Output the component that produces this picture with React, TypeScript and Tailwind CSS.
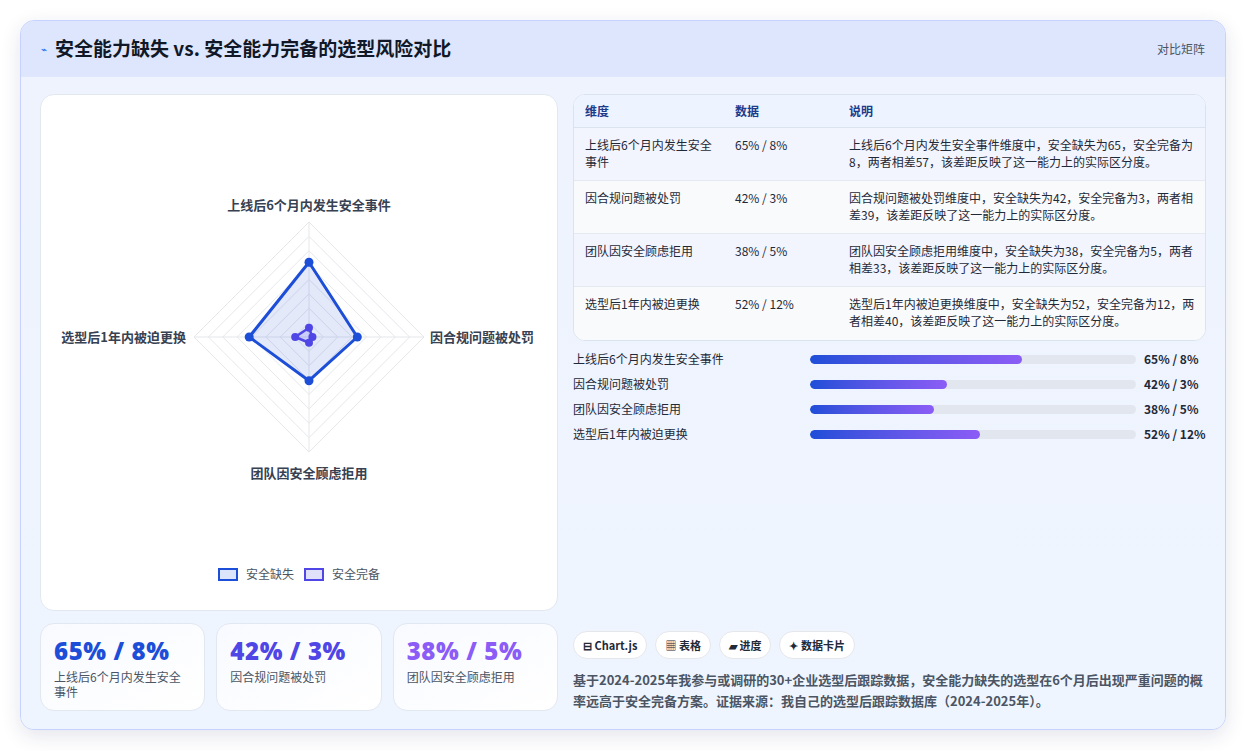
import React from "react";

const dims = ["上线后6个月内发生安全事件", "因合规问题被处罚", "团队因安全顾虑拒用", "选型后1年内被迫更换"];
const a = [65, 42, 38, 52];
const b = [8, 3, 5, 12];
const desc = [
  "上线后6个月内发生安全事件维度中，安全缺失为65，安全完备为8，两者相差57，该差距反映了这一能力上的实际区分度。",
  "因合规问题被处罚维度中，安全缺失为42，安全完备为3，两者相差39，该差距反映了这一能力上的实际区分度。",
  "团队因安全顾虑拒用维度中，安全缺失为38，安全完备为5，两者相差33，该差距反映了这一能力上的实际区分度。",
  "选型后1年内被迫更换维度中，安全缺失为52，安全完备为12，两者相差40，该差距反映了这一能力上的实际区分度。",
];

function Radar() {
  const cx = 268, cy = 242, R = 115;
  const pts = (v: number[]) => {
    const dirs = [[0, -1], [1, 0], [0, 1], [-1, 0]];
    return v.map((x, i) => [cx + dirs[i][0] * R * x / 100, cy + dirs[i][1] * R * x / 100]);
  };
  const rings = [1, 2, 3, 4, 5, 6, 7, 8].map(i => i / 8);
  const pa = pts(a), pb = pts(b);
  return (
    <svg width="517" height="470" viewBox="0 0 517 470">
      {rings.map((r, i) => (
        <polygon key={i} points={`${cx},${cy - R * r} ${cx + R * r},${cy} ${cx},${cy + R * r} ${cx - R * r},${cy}`} fill="none" stroke="#e5e7eb" strokeWidth="1" />
      ))}
      <line x1={cx} y1={cy - R} x2={cx} y2={cy + R} stroke="#e5e7eb" />
      <line x1={cx - R} y1={cy} x2={cx + R} y2={cy} stroke="#e5e7eb" />
      <polygon points={pa.map(p => p.join(",")).join(" ")} fill="rgba(29,78,216,0.12)" stroke="#1d4ed8" strokeWidth="3" strokeLinejoin="round" />
      {pa.map((p, i) => <circle key={i} cx={p[0]} cy={p[1]} r="4.5" fill="#1d4ed8" />)}
      <polygon points={pb.map(p => p.join(",")).join(" ")} fill="rgba(99,102,241,0.2)" stroke="#4f46e5" strokeWidth="2.5" strokeLinejoin="round" />
      {pb.map((p, i) => <circle key={i} cx={p[0]} cy={p[1]} r="4" fill="#4f46e5" />)}
      <text x={cx} y={cy - R - 12} textAnchor="middle" fontSize="13" fontWeight="600" fill="#374151">上线后6个月内发生安全事件</text>
      <text x={cx + R + 6} y={cy + 5} textAnchor="start" fontSize="13" fontWeight="600" fill="#374151">因合规问题被处罚</text>
      <text x={cx} y={cy + R + 12 + 14} textAnchor="middle" fontSize="13" fontWeight="600" fill="#374151">团队因安全顾虑拒用</text>
      <text x={cx - R - 8} y={cy + 5} textAnchor="end" fontSize="13" fontWeight="600" fill="#374151">选型后1年内被迫更换</text>
    </svg>
  );
}

export default function App() {
  return (
    <div className="w-[1246px] h-[751px] bg-white p-[20px]" style={{ fontFamily: '"Noto Sans CJK SC", "Noto Sans", sans-serif' }}>
      <div className="w-[1206px] h-[710px] rounded-[14px] border border-[#c7d2fe] bg-[#eef4ff] shadow-[0_6px_20px_rgba(30,41,99,0.12)] overflow-hidden flex flex-col">
        <div className="h-[56px] shrink-0 bg-[#dde6fd] flex items-center justify-between px-[20px] border-b border-[#e0e7ff]">
          <div className="flex items-center gap-[8px]">
            <span className="text-[#2563eb] text-[10px]">⌁</span>
            <span className="text-[19px] font-bold text-[#111827]">安全能力缺失 vs. 安全能力完备的选型风险对比</span>
          </div>
          <span className="text-[12px] text-[#4b5563]">对比矩阵</span>
        </div>
        <div className="flex-1 flex gap-[15px] px-[19px] pt-[17px] pb-[19px] bg-gradient-to-b from-[#eef3fe] to-[#eff5ff]">
          <div className="w-[518px] flex flex-col gap-[12px]">
            <div className="h-[517px] bg-white rounded-[14px] border border-[#e2e8f0] flex flex-col items-center">
              <div className="pt-[0px]"><Radar /></div>
              <div className="flex items-center gap-[8px] text-[12px] text-[#4b5563] -mt-[0px]">
                <span className="w-[20px] h-[13px] border-[2.5px] border-[#1d4ed8] bg-[#dbe4fb]" />
                <span>安全缺失</span>
                <span className="w-[20px] h-[13px] border-[2.5px] border-[#4f46e5] bg-[#e0e0fb] ml-[2px]" />
                <span>安全完备</span>
              </div>
            </div>
            <div className="flex gap-[11px] h-[88px]">
              {[0, 1, 2].map(i => (
                <div key={i} className="flex-1 rounded-[14px] border border-[#e2e8f0] bg-gradient-to-br from-[#f8faff] to-white px-[13px] pt-[12px]">
                  <div className={`text-[24px] leading-[30px] font-extrabold tracking-wide ${i === 0 ? "text-[#1d4ed8]" : i === 1 ? "text-[#4f46e5]" : "text-[#8b5cf6]"}`} style={{ fontFamily: '"Open Sans", "Noto Sans CJK SC", sans-serif' }}>{a[i]}% / {b[i]}%</div>
                  <div className="text-[12px] leading-[15px] text-[#4b5563] mt-[3px] w-[135px]">{dims[i]}</div>
                </div>
              ))}
            </div>
          </div>
          <div className="w-[635px] flex flex-col justify-between">
            <div>
              <div className="rounded-[12px] border border-[#dbe3ef] overflow-hidden bg-white text-[12px]">
                <div className="flex h-[33px] items-center bg-[#eef4ff] border-b border-[#dbe3ef] text-[#1e3a8a] font-semibold">
                  <div className="w-[151px] pl-[11px]">维度</div>
                  <div className="w-[114px] pl-[10px]">数据</div>
                  <div className="flex-1 pl-[10px]">说明</div>
                </div>
                {dims.map((d, i) => (
                  <div key={i} className={`flex h-[53px] pt-[8px] leading-[17px] text-[#1f2937] ${i % 2 === 0 ? "bg-[#f2f5fe]" : "bg-[#f9fafc]"} ${i < 3 ? "border-b border-[#e5e9f2]" : ""}`}>
                    <div className="w-[151px] pl-[11px] pr-[8px]">{d}</div>
                    <div className="w-[114px] pl-[10px]">{a[i]}% / {b[i]}%</div>
                    <div className="flex-1 pl-[10px] pr-[10px]">{desc[i]}</div>
                  </div>
                ))}
              </div>
              <div className="mt-[9px] flex flex-col gap-[7px]">
                {dims.map((d, i) => (
                  <div key={i} className="flex items-center h-[18px] text-[12px] text-[#1f2937]">
                    <div className="w-[237px]">{d}</div>
                    <div className="w-[326px] h-[9px] rounded-full bg-[#e2e6ee] overflow-hidden">
                      <div className="h-full rounded-full bg-gradient-to-r from-[#1d4ed8] to-[#8b5cf6]" style={{ width: `${a[i]}%` }} />
                    </div>
                    <div className="ml-[8px] font-bold">{a[i]}% / {b[i]}%</div>
                  </div>
                ))}
              </div>
            </div>
            <div>
              <div className="flex gap-[8px] text-[11px] font-semibold text-[#1f2937]">
                {["⊟ Chart.js", "▦ 表格", "▰ 进度", "✦ 数据卡片"].map(t => (
                  <span key={t} className="h-[28px] flex items-center px-[9px] rounded-full bg-white border border-[#e5e7eb]">{t}</span>
                ))}
              </div>
              <p className="mt-[10px] text-[13px] leading-[21px] font-semibold text-[#4b5563]">基于2024-2025年我参与或调研的30+企业选型后跟踪数据，安全能力缺失的选型在6个月后出现严重问题的概率远高于安全完备方案。证据来源：我自己的选型后跟踪数据库（2024-2025年）。</p>
            </div>
          </div>
        </div>
      </div>
    </div>
  );
}
